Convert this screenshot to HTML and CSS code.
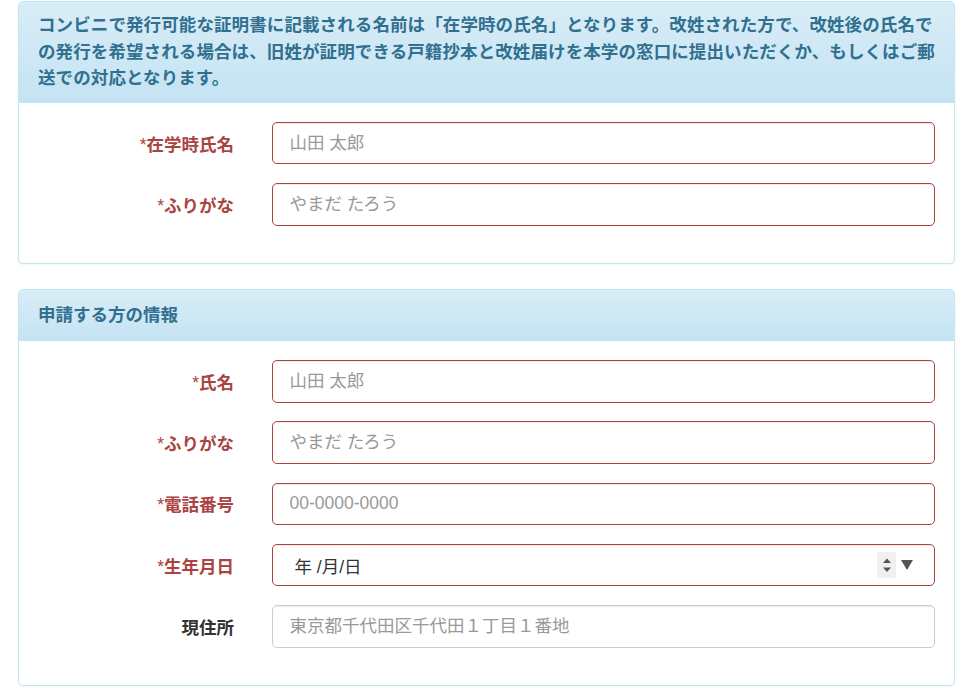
FILE: index.html
```html
<!DOCTYPE html>
<html lang="ja">
<head>
<meta charset="utf-8">
<title>証明書発行申請</title>
<link rel="stylesheet" href="styles.css">
</head>
<body>
<div class="page">
  <section class="panel">
    <div class="panel-heading notice">
      <p class="notice-text">コンビニで発行可能な証明書に記載される名前は「在学時の氏名」となります。改姓された方で、改姓後の氏名で<br>の発行を希望される場合は、旧姓が証明できる戸籍抄本と改姓届けを本学の窓口に提出いただくか、もしくはご郵<br>送での対応となります。</p>
    </div>
    <div class="panel-body">
      <div class="form-row">
        <label class="label req"><span class="star">*</span>在学時氏名</label>
        <input class="field error" type="text" placeholder="山田 太郎">
      </div>
      <div class="form-row">
        <label class="label req"><span class="star">*</span>ふりがな</label>
        <input class="field error" type="text" placeholder="やまだ たろう">
      </div>
    </div>
  </section>

  <section class="panel">
    <div class="panel-heading">
      <h3 class="panel-title">申請する方の情報</h3>
    </div>
    <div class="panel-body">
      <div class="form-row">
        <label class="label req"><span class="star">*</span>氏名</label>
        <input class="field error" type="text" placeholder="山田 太郎">
      </div>
      <div class="form-row">
        <label class="label req"><span class="star">*</span>ふりがな</label>
        <input class="field error" type="text" placeholder="やまだ たろう">
      </div>
      <div class="form-row">
        <label class="label req"><span class="star">*</span>電話番号</label>
        <input class="field error" type="text" placeholder="00-0000-0000">
      </div>
      <div class="form-row">
        <label class="label req"><span class="star">*</span>生年月日</label>
        <div class="field error date-field">
          <span class="date-text">年 /月/日</span>
          <span class="date-controls">
            <span class="spinner">
              <svg width="10" height="20" viewBox="0 0 10 20"><path d="M1 8 L5 3.5 L9 8 Z" fill="#555"/><path d="M1 12.5 L5 17 L9 12.5 Z" fill="#555"/></svg>
            </span>
            <svg class="drop" width="12" height="10" viewBox="0 0 12 10"><path d="M0 0 L12 0 L6 10 Z" fill="#555"/></svg>
          </span>
        </div>
      </div>
      <div class="form-row">
        <label class="label">現住所</label>
        <input class="field" type="text" placeholder="東京都千代田区千代田１丁目１番地">
      </div>
    </div>
  </section>
</div>
</body>
</html>
```
FILE: styles.css
```css
html, body {
  margin: 0;
  padding: 0;
  background: #fff;
}
body {
  font-family: "Liberation Sans", "Noto Sans CJK JP", sans-serif;
  font-size: 17.5px;
  color: #333;
}
.page {
  padding: 1px 12px 0 18px;
}
.panel {
  border: 1px solid #bce8f1;
  border-radius: 5px;
  background: #fff;
  margin-bottom: 25px;
  box-shadow: 0 1px 2px rgba(0,0,0,0.05);
}
.panel-heading {
  background: linear-gradient(to bottom, #d9edf7 0%, #c4e3f3 100%);
  border-bottom: 1px solid #bce8f1;
  border-radius: 4px 4px 0 0;
  padding: 12.5px 19px;
  color: #31708f;
}
.panel-title {
  margin: 0;
  font-size: 17.5px;
  line-height: 25px;
  font-weight: bold;
}
.notice {
  padding: 10px 19px 10px;
}
.notice-text {
  margin: 0;
  font-weight: bold;
  font-size: 17.5px;
  line-height: 26.6px;
  letter-spacing: 0.1px;
  white-space: nowrap;
}
.panel-body {
  padding: 19px 19px 37.5px 18.75px;
  display: flex;
  flex-direction: column;
  gap: 18.75px;
}
.form-row {
  display: grid;
  grid-template-columns: 196.25px 1fr;
  column-gap: 37.5px;
  align-items: center;
}
.label {
  text-align: right;
  font-weight: bold;
  color: #333;
}
.label.req {
  color: #a94442;
}
.star {
  font-weight: normal;
}
.field {
  box-sizing: border-box;
  height: 42.5px;
  width: 100%;
  margin: 0;
  padding: 0 17px;
  border: 1px solid #ccc;
  border-radius: 5px;
  font-family: "Liberation Sans", "Noto Sans CJK JP", sans-serif;
  font-size: 17.5px;
  color: #555;
  background: #fff;
  box-shadow: inset 0 1px 1px rgba(0,0,0,0.075);
  outline: none;
}
.field.error {
  border-color: #a94442;
}
.field::placeholder {
  color: #999;
  opacity: 1;
}
.date-field {
  display: flex;
  align-items: center;
  justify-content: space-between;
  padding: 0 21px 0 22px;
}
.date-text {
  color: #333;
}
.date-controls {
  display: flex;
  align-items: center;
  gap: 5px;
}
.spinner {
  display: flex;
  align-items: center;
  justify-content: center;
  width: 19px;
  height: 26px;
  background: #f0f0f0;
}
.drop {
  display: block;
}
```
